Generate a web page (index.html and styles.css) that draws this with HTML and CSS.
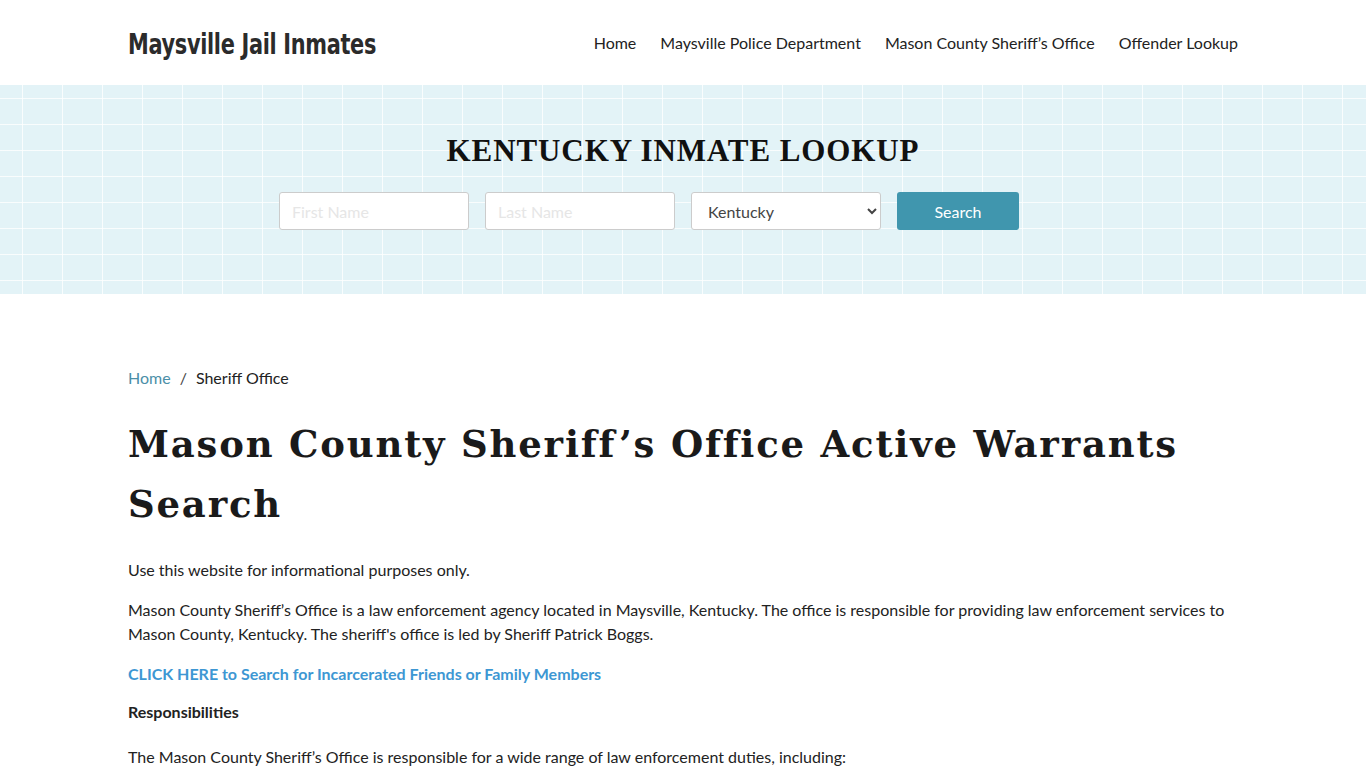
FILE: index.html
```html
<!DOCTYPE html>
<html lang="en">
<head>
    <meta charset="UTF-8">
    <meta name="viewport" content="width=device-width, initial-scale=1.0">
    <title>Mason County Sheriff's Office Active Warrants Search</title>
    <link rel="stylesheet" href="styles.css">
</head>
<body>
    <header class="site-header">
        <div class="container header-row">
            <a class="logo" href="#">Maysville Jail Inmates</a>
            <nav class="main-nav">
                <a href="#">Home</a>
                <a href="#">Maysville Police Department</a>
                <a href="#">Mason County Sheriff’s Office</a>
                <a href="#">Offender Lookup</a>
            </nav>
        </div>
    </header>

    <section class="hero">
        <h2 class="hero-title">KENTUCKY INMATE LOOKUP</h2>
        <form class="search-form">
            <input type="text" placeholder="First Name">
            <input type="text" placeholder="Last Name">
            <select>
                <option>Kentucky</option>
            </select>
            <button type="button" class="search-btn">Search</button>
        </form>
    </section>

    <main class="container content">
        <div class="breadcrumb">
            <a href="#">Home</a>
            <span class="sep">/</span>
            <span>Sheriff Office</span>
        </div>

        <h1 class="page-title">Mason County Sheriff’s Office Active Warrants Search</h1>

        <p>Use this website for informational purposes only.</p>
        <p>Mason County Sheriff’s Office is a law enforcement agency located in Maysville, Kentucky. The office is responsible for providing law enforcement services to Mason County, Kentucky. The sheriff's office is led by Sheriff Patrick Boggs.</p>
        <p class="link-row"><a class="cta" href="#">CLICK HERE to Search for Incarcerated Friends or Family Members</a></p>
        <p class="sub"><strong>Responsibilities</strong></p>
        <p>The Mason County Sheriff’s Office is responsible for a wide range of law enforcement duties, including:</p>
    </main>
</body>
</html>
```

FILE: styles.css
```css
body {
    font-family: Lato, "Open Sans", sans-serif;
    font-size: 16px;
    line-height: 24px;
    color: #222;
    margin: 0;
    background: #fff;
}
a {
    text-decoration: none;
}
.container {
    width: 1110px;
    margin: 0 auto;
}
.site-header {
    height: 85px;
}
.header-row {
    height: 85px;
    display: flex;
    align-items: center;
    justify-content: space-between;
}
.logo {
    font-family: "DejaVu Sans", sans-serif;
    font-stretch: condensed;
    font-weight: bold;
    font-size: 29px;
    letter-spacing: -0.4px;
    color: #2b2b2b;
    padding-top: 2px;
    transform: scaleX(0.8);
    transform-origin: left center;
}
.main-nav {
    display: flex;
    gap: 24px;
}
.main-nav a {
    color: #222;
}
.hero {
    height: 209px;
    background-color: #e3f3f7;
    background-image:
        repeating-linear-gradient(90deg, transparent 0 22px, rgba(255,255,255,0.8) 22px 23px, transparent 23px 40px),
        repeating-linear-gradient(0deg, transparent 0 13px, rgba(255,255,255,0.8) 13px 14px, transparent 14px 26px);
    text-align: center;
    padding-top: 48px;
    box-sizing: border-box;
}
.hero-title {
    font-family: "Liberation Serif", serif;
    font-weight: bold;
    font-size: 31px;
    letter-spacing: 0.9px;
    line-height: 36px;
    color: #111;
    margin: 0 0 23px;
}
.search-form {
    display: flex;
    justify-content: center;
    gap: 16px;
    padding-right: 68px;
}
.search-form input,
.search-form select {
    width: 190px;
    height: 38px;
    box-sizing: border-box;
    border: 1px solid #ccc;
    border-radius: 3px;
    background: #fff;
    font-family: Lato, sans-serif;
    font-size: 16px;
    padding: 0 12px;
    color: #444;
}
.search-form input::placeholder {
    color: #e6e6e6;
}
.search-form select {
    padding: 0 10px 0 12px;
}
.search-btn {
    width: 122px;
    height: 38px;
    border: none;
    border-radius: 3px;
    background: #4096ae;
    color: #fff;
    font-family: Lato, sans-serif;
    font-size: 16px;
}
.content {
    padding-top: 72px;
}
.breadcrumb {
    display: flex;
    gap: 9px;
    margin-bottom: 24px;
}
.breadcrumb a {
    color: #4b8fa8;
}
.breadcrumb .sep {
    color: #444;
}
.page-title {
    font-family: "DejaVu Serif", serif;
    font-weight: bold;
    font-size: 37px;
    line-height: 60px;
    letter-spacing: 1.8px;
    color: #1a1a1a;
    margin: 0 0 24px;
}
.content p {
    margin: 0 0 16px;
}
.cta {
    color: #3d97d3;
    font-weight: bold;
}
.content p.link-row {
    margin-bottom: 14px;
}
.content p.sub {
    margin-bottom: 21px;
}
```
